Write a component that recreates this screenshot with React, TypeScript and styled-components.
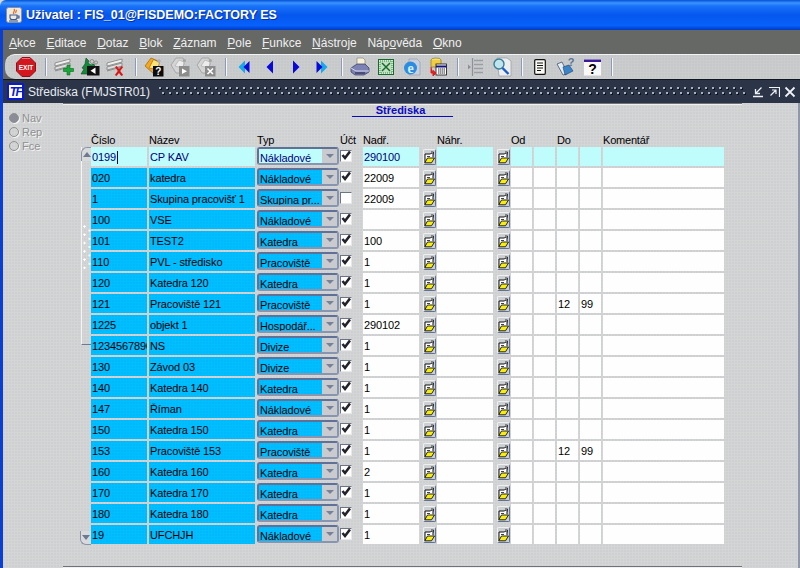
import React from 'react'
import styled, { createGlobalStyle, css } from 'styled-components'

const GlobalStyle = createGlobalStyle`
  html, body {
    margin: 0;
    padding: 0;
    overflow: hidden;
    background: #d6d6d6;
    font-family: "Liberation Sans", Arial, sans-serif;
  }
`

const grayDither = css`
  background-color: #d4d5d5;
  background-image: radial-gradient(circle at 1px 1px, rgba(170, 175, 190, 0.35) 0.6px, transparent 0.8px);
  background-size: 3px 3px;
`

const blueDither = css`
  background-color: #00bfff;
  background-image: radial-gradient(circle at 1px 1px, rgba(0, 120, 235, 0.2) 0.6px, transparent 0.8px);
  background-size: 3px 3px;
`

const Screen = styled.div`
  width: 800px;
  height: 568px;
  overflow: hidden;
  display: flex;
  flex-direction: column;
  color: #000;
  font-size: 11px;
`

const TitleBar = styled.div`
  height: 30px;
  flex: none;
  display: flex;
  align-items: center;
  gap: 4px;
  padding: 0 0 0 6px;
  border-top-left-radius: 6px;
  background: linear-gradient(180deg, #0450d6 0, #3b94ff 3px, #1a72f8 6px, #0557ee 50%, #0761fb 85%, #0039c4 100%);
`

const TitleText = styled.div`
  color: #fff;
  font-size: 12.5px;
  font-weight: 700;
  white-space: nowrap;
  text-shadow: 1px 1px 0 #0a2f9c;
`

const Shell = styled.div`
  flex: 1;
  min-height: 0;
  display: flex;
  flex-direction: column;
  border-left: 3px solid #0b3fd2;
`

const MenuBar = styled.div`
  height: 24px;
  flex: none;
  display: flex;
  align-items: center;
  gap: 10.7px;
  padding: 2px 0 0 6px;
  box-sizing: border-box;
  background: #666866;
  color: #f0f0f0;
  font-size: 12px;
`

const MenuItem = styled.span`
  white-space: nowrap;
  & u {
    text-underline-offset: 1px;
  }
`

const Toolbar = styled.div`
  height: 25px;
  flex: none;
  display: flex;
  align-items: center;
  box-sizing: border-box;
  padding-left: 8px;
  margin-left: 2px;
  border-top: 1px solid #f2f2f2;
  border-top-left-radius: 10px;
  border-bottom-left-radius: 10px;
  ${grayDither}
  background-color: #cbcdcd;
`

const ToolbarEdge = styled.div`
  flex: none;
  background: #666866;
`

const Tool = styled.div`
  width: 26px;
  height: 22px;
  flex: none;
  display: flex;
  align-items: center;
  justify-content: center;
`

const ToolSep = styled.div`
  width: 12px;
  height: 18px;
  flex: none;
  display: flex;
  justify-content: center;
  &::before {
    content: '';
    width: 1px;
    height: 100%;
    background: #8a9ab8;
    box-shadow: 1px 0 0 #f4f6fa;
  }
`

const FormBar = styled.div`
  height: 24px;
  flex: none;
  display: flex;
  align-items: center;
  box-sizing: border-box;
  padding: 0 4px 0 4px;
  background: #2b3547;
  border-top: 1px solid #10161f;
  color: #e8ecf2;
  font-size: 12px;
`

const FormLogo = styled.div`
  width: 17px;
  height: 17px;
  flex: none;
  display: flex;
  align-items: center;
  justify-content: center;
  box-sizing: border-box;
  background: #fff;
  border: 2px solid #0a1ad0;
  color: #0a1ad0;
  font: italic 700 12px "Liberation Sans", sans-serif;
  letter-spacing: -1.5px;
`

const FormTitle = styled.div`
  margin-left: 4px;
  white-space: nowrap;
`

const Dots = styled.div`
  flex: 1;
  height: 10px;
  margin: 0 6px 0 9px;
  background-image:
    radial-gradient(circle at 1px 1px, #aab2c0 0.9px, transparent 1px),
    radial-gradient(circle at 4px 6px, #aab2c0 0.9px, transparent 1px),
    radial-gradient(circle at 2px 2px, #0c121c 0.9px, transparent 1px),
    radial-gradient(circle at 5px 7px, #0c121c 0.9px, transparent 1px);
  background-size: 7px 10px;
`

const WinButtons = styled.div`
  display: flex;
  align-items: center;
  gap: 4px;
  flex: none;
`

const Content = styled.div`
  flex: 1;
  min-height: 0;
  display: flex;
  border-right: 2px solid #8f98a8;
  ${grayDither}
`

const Side = styled.div`
  width: 77px;
  flex: none;
  box-sizing: border-box;
  padding: 9px 0 0 6px;
  display: flex;
  flex-direction: column;
  gap: 3px;
`

const RadioRow = styled.div`
  height: 11px;
  display: flex;
  align-items: center;
  gap: 3px;
  color: #8f9090;
  text-shadow: 1px 1px 0 #f4f4f4;
  font-size: 11px;
`

const Radio = styled.span<{ $on?: boolean }>`
  width: 8px;
  height: 8px;
  border-radius: 50%;
  border: 1px solid #8f9090;
  box-shadow: 1px 1px 0 #f6f6f6;
  background: ${p => (p.$on ? '#8a8c98' : 'transparent')};
`

const Form = styled.div`
  width: 644px;
  flex: none;
  display: flex;
  flex-direction: column;
`

const Rule = styled.div<{ $top?: number }>`
  width: 679px;
  height: 2px;
  flex: none;
  box-sizing: border-box;
  margin-left: -17px;
  margin-top: ${p => p.$top ?? 0}px;
  background: #f0f0f0;
  border-top: 1px solid #6f7278;
`

const Heading = styled.div`
  align-self: center;
  width: 101px;
  height: 12px;
  line-height: 10px;
  flex: none;
  text-align: center;
  box-sizing: border-box;
  padding-right: 3px;
  color: #0a0ac4;
  font-weight: 700;
  border-bottom: 1px solid #0a0ac4;
`

const Grid = styled.div`
  display: grid;
  grid-template-columns: 58px 108px 83px 23px 60px 14px 60px 14px 23px 23px 23px 23px 121px;
`

const HeaderRow = styled(Grid)`
  height: 15px;
  margin: 15px 0 0 11px;
  align-items: center;
  line-height: 14px;
`

const Label = styled.div`
  white-space: nowrap;
  letter-spacing: -0.2px;
`

const TableBody = styled.div`
  display: flex;
  flex: none;
`

const Scroll = styled.div`
  width: 11px;
  height: 398px;
  flex: none;
  display: flex;
  flex-direction: column;
  box-sizing: border-box;
`

const Thumb = styled.div`
  height: 198px;
  flex: none;
  box-sizing: border-box;
  border-left: 1px solid #f4f4f4;
  border-bottom: 1px solid #6e7890;
  margin-left: 1px;
  position: relative;
`

const ThumbCap = styled.div`
  height: 14px;
  margin-left: -1px;
  display: flex;
  align-items: center;
  justify-content: center;
  box-sizing: border-box;
  border: 1px solid #8a94a8;
  border-bottom: 0;
  border-right: 0;
  border-radius: 6px 0 0 0;
  background: #d9dadc;
`

const Grip = styled.div`
  position: absolute;
  left: 1px;
  top: 78px;
  width: 8px;
  height: 44px;
  background-image:
    radial-gradient(circle at 1.5px 1.5px, #fff 1px, transparent 1.2px),
    radial-gradient(circle at 6.5px 5.5px, #fff 1px, transparent 1.2px);
  background-size: 8px 8.3px;
`

const ScrollEnd = styled.div`
  height: 14px;
  margin-top: auto;
  flex: none;
  display: flex;
  align-items: center;
  justify-content: center;
  box-sizing: border-box;
  border: 1px solid #8a94a8;
  border-top: 0;
  border-right: 0;
  border-radius: 0 0 0 6px;
  background: #d9dadc;
`

const Arrow = styled.span<{ $down?: boolean }>`
  width: 0;
  height: 0;
  border-left: 4px solid transparent;
  border-right: 4px solid transparent;
  ${p => (p.$down ? 'border-top: 5px solid #6e7890;' : 'border-bottom: 5px solid #6e7890;')}
`

const Rows = styled.div`
  display: flex;
  flex-direction: column;
  gap: 2px;
`

const Row = styled(Grid)`
  height: 19px;
  align-items: stretch;
`

const Cell = styled.div<{ $kind: 'blue' | 'white' | 'current'; $gap?: number }>`
  height: 19px;
  line-height: 20px;
  margin-right: ${p => p.$gap ?? 2}px;
  padding-left: 1px;
  overflow: hidden;
  white-space: nowrap;
  box-sizing: border-box;
  letter-spacing: -0.12px;
  ${p => p.$kind === 'blue' && blueDither}
  ${p => p.$kind === 'white' && 'background: #fdfefd;'}
  ${p => p.$kind === 'current' && 'background: #bffdfd; color: #00007c;'}
`

const Caret = styled.span`
  display: inline-block;
  width: 1px;
  height: 13px;
  margin-left: 1px;
  vertical-align: -3px;
  background: #00007c;
`

const Select = styled.div`
  height: 18px;
  margin-right: 1px;
  display: flex;
  box-sizing: border-box;
  border: 2px solid #5f7196;
  border-radius: 3px;
  border-right-color: #8795b0;
  border-bottom-color: #8795b0;
  background: #d0d4d8;
`

const SelectValue = styled.div<{ $current?: boolean }>`
  flex: 1;
  min-width: 0;
  padding: 3px 0 0 1px;
  line-height: 13px;
  white-space: nowrap;
  overflow: hidden;
  letter-spacing: -0.12px;
  ${p => (p.$current ? 'background: #bffdfd; color: #00007c;' : blueDither)}
`

const SelectButton = styled.div`
  width: 15px;
  flex: none;
  display: flex;
  align-items: center;
  justify-content: center;
  background: #c9cbce;
`

const SmallArrow = styled.span`
  width: 0;
  height: 0;
  border-left: 4px solid transparent;
  border-right: 4px solid transparent;
  border-top: 4px solid #76829a;
`

const Check = styled.div`
  width: 12px;
  height: 12px;
  margin-top: 3px;
  box-sizing: border-box;
  background: #fdfefd;
  border-top: 1px solid #6c7484;
  border-left: 1px solid #6c7484;
  border-right: 1px solid #e8e8e8;
  border-bottom: 1px solid #e8e8e8;
  display: flex;
`

const FolderButton = styled.div`
  width: 13px;
  height: 16px;
  margin: 2px 0 0 0;
  box-sizing: border-box;
  display: flex;
  align-items: center;
  justify-content: center;
  background: #cdd0d2;
  border-top: 1px solid #eef0f2;
  border-left: 1px solid #eef0f2;
  border-right: 1px solid #5f7196;
  border-bottom: 1px solid #5f7196;
  border-radius: 2px;
`

function JavaIcon() {
  return (
    <svg width="16" height="16" viewBox="0 0 16 16">
      <rect x="0.5" y="0.5" width="15" height="15" rx="2" fill="#efe9dc" stroke="#8a8f9e" />
      <path d="M8 2c2 2-2 3 0 5M10 3c1 1-1 2 0 3" stroke="#e0651c" strokeWidth="1.2" fill="none" />
      <path d="M4 8h7v2.5c0 1-1 2-2 2H6c-1 0-2-1-2-2zM11 9h2v2h-2" fill="none" stroke="#3a5a94" strokeWidth="1.1" />
      <path d="M3 14h9" stroke="#3a5a94" strokeWidth="1.1" />
    </svg>
  )
}

function ExitIcon() {
  return (
    <svg width="20" height="20" viewBox="0 0 20 20">
      <polygon points="6,0.5 14,0.5 19.5,6 19.5,14 14,19.5 6,19.5 0.5,14 0.5,6" fill="#d4161e" stroke="#8c1218" />
      <path d="M6 1.5h8" stroke="#f0707a" />
      <text x="10" y="12.6" textAnchor="middle" fontSize="6.6" fontWeight="700" fill="#fff" fontFamily="Liberation Sans, sans-serif">EXIT</text>
    </svg>
  )
}

function Strips() {
  const c = '#7e7e7e'
  return (
    <>
      <path d="M1 6L16 2v3L1 9z" fill="#f0f0f0" stroke={c} strokeWidth="0.8" />
      <path d="M1 10L16 6v3L1 13z" fill="#e0e0e0" stroke={c} strokeWidth="0.8" />
      <path d="M1 14L14 10.5" stroke={c} strokeWidth="0.8" />
    </>
  )
}

function AddIcon() {
  return (
    <svg width="20" height="20" viewBox="0 0 20 20">
      <Strips />
      <path d="M13 8h3v3.5h3.5v3H16V18h-3v-3.500H9.500v-3H13z" fill="#18a838" stroke="#0c6a20" strokeWidth="0.6" />
    </svg>
  )
}

function LockIcon() {
  return (
    <svg width="20" height="20" viewBox="0 0 20 20">
      <path d="M6 1l3 3-1 2 3 2 3-1 1 3H8v7H1l3-5-2-1 3-4z" fill="#148a3c" stroke="#0a4a20" strokeWidth="0.6" />
      <circle cx="12" cy="4.500" r="2" fill="#c8c8c8" stroke="#555" strokeWidth="0.5" />
      <circle cx="16" cy="5.500" r="1.600" fill="#c8c8c8" stroke="#555" strokeWidth="0.5" />
      <rect x="7" y="9" width="12.500" height="9.500" fill="#111" />
      <path d="M15.500 10.500v6.500L10.500 13.700z" fill="#fff" />
    </svg>
  )
}

function RemoveIcon() {
  return (
    <svg width="20" height="20" viewBox="0 0 20 20">
      <Strips />
      <path d="M9 10l1.800-1L13 12l2.500-3 1.700 1-3 4 3 4-1.900 1-2.300-3-2.500 3-1.700-1 3-4z" fill="#d81818" />
    </svg>
  )
}

function QueryIcon() {
  return (
    <svg width="20" height="20" viewBox="0 0 20 20">
      <path d="M1 9L7 1l7 3-4 13z" fill="#f4a81c" stroke="#a06008" strokeWidth="0.7" />
      <path d="M5 11L9.500 2.500l6 3-2 7z" fill="#fce27a" stroke="#a06008" strokeWidth="0.6" />
      <circle cx="15" cy="4" r="1.800" fill="#a8b0c8" />
      <rect x="9" y="9" width="10.500" height="10.500" fill="#0c0c0c" />
      <text x="14.200" y="18" textAnchor="middle" fontSize="10" fontWeight="700" fill="#fff" fontFamily="Liberation Sans, sans-serif">?</text>
    </svg>
  )
}

function GrayCards({ x }: { x?: boolean }) {
  return (
    <svg width="20" height="20" viewBox="0 0 20 20">
      <path d="M1 8L6 1h7l1 6-3 9H6z" fill="#d4d4d4" stroke="#9a9a9a" strokeWidth="0.8" />
      <path d="M5 9L9 3l5 2-1 6z" fill="#ececec" stroke="#a4a4a4" strokeWidth="0.6" />
      <circle cx="14.500" cy="3.500" r="1.500" fill="#a4a4a4" />
      <rect x="9" y="9" width="10.500" height="10.500" fill="#8c8c8c" />
      {x
        ? <path d="M11.500 11.500l5.500 5.500M17 11.500L11.500 17" stroke="#fff" strokeWidth="1.600" />
        : <path d="M12 11.500v5.500l5-2.700z" fill="#fff" />}
    </svg>
  )
}

function NavIcon({ dir, double }: { dir: 'left' | 'right'; double?: boolean }) {
  const flip = dir === 'right' ? 'translate(12 0) scale(-1 1)' : undefined
  return (
    <svg width="12" height="14" viewBox="0 0 12 14">
      <g transform={flip}>
        {double ? (
          <>
            <path d="M7 0.500L0.500 7 7 13.500z" fill="#18a8e8" />
            <path d="M11.500 1L5.500 7l6 6z" fill="#0808d8" />
          </>
        ) : (
          <path d="M9 0.500L2.500 7 9 13.500z" fill="#0808d8" />
        )}
      </g>
    </svg>
  )
}

function PrinterIcon() {
  return (
    <svg width="20" height="20" viewBox="0 0 20 20">
      <path d="M7 1h6l2 2v7H7z" fill="#f6f2d8" stroke="#777" strokeWidth="0.6" />
      <path d="M1 11l6-4h8l4 4v4l-5 3H5l-4-3z" fill="#7c82b4" stroke="#34365c" strokeWidth="0.7" />
      <path d="M1 11l5 3h13" fill="none" stroke="#d4d6ee" strokeWidth="1" />
      <path d="M5 16h10" stroke="#2a2c4c" strokeWidth="1.200" />
    </svg>
  )
}

function ExcelIcon() {
  return (
    <svg width="16" height="16" viewBox="0 0 16 16">
      <rect x="0.500" y="0.500" width="15" height="15" fill="#d8ecd8" stroke="#186a2c" />
      <rect x="2" y="2" width="12" height="12" fill="#c0e0c0" stroke="#2c8a44" strokeDasharray="1 1" />
      <path d="M4 4l8 8M12 4l-8 8" stroke="#186a2c" strokeWidth="1.500" />
    </svg>
  )
}

function BrowserIcon() {
  return (
    <svg width="18" height="18" viewBox="0 0 18 18">
      <path d="M6 1h8l3 3v13H6z" fill="#c8d0de" stroke="#8a94a8" strokeWidth="0.6" />
      <circle cx="7.500" cy="10" r="6.500" fill="#2c8ce0" />
      <text x="7.500" y="15" textAnchor="middle" fontSize="14" fontWeight="700" fill="#d8f0ff" fontFamily="Liberation Serif, serif">e</text>
    </svg>
  )
}

function ExportIcon() {
  return (
    <svg width="18" height="20" viewBox="0 0 18 20">
      <ellipse cx="7" cy="3" rx="5" ry="2" fill="#f4e070" stroke="#7c6a10" strokeWidth="0.6" />
      <path d="M2 3v7h10V3" fill="#f0cc40" stroke="#7c6a10" strokeWidth="0.6" />
      <rect x="7" y="7" width="10.500" height="11" fill="#fff" stroke="#111" strokeWidth="0.8" />
      <path d="M7 9.500h10.500" stroke="#101080" strokeWidth="2" />
      <path d="M9 12h7M9 14h7M9 16h7" stroke="#111" strokeWidth="0.9" strokeDasharray="1.500 0.500" />
      <path d="M2 10v6h2.500M4 13.500L7 16l-3 3z" fill="#e01c1c" stroke="#e01c1c" strokeWidth="1" />
    </svg>
  )
}

function ListIcon() {
  return (
    <svg width="18" height="20" viewBox="0 0 18 20">
      <path d="M5.500 1v18" stroke="#8e9298" strokeWidth="1.200" />
      <path d="M1 7.500l3 2.500-3 2.500z" fill="#8e9298" />
      <path d="M7 3.500h9M7 7.500h9M7 11.500h9M7 15.500h9" stroke="#9a9ea4" strokeWidth="1.300" />
    </svg>
  )
}

function MagnifyIcon() {
  return (
    <svg width="20" height="20" viewBox="0 0 20 20">
      <path d="M5 1h10l4 3v15H7z" fill="#eceef0" stroke="#8a8e96" strokeWidth="0.6" />
      <circle cx="7" cy="7" r="5" fill="#bfe4ec" stroke="#3c7c98" strokeWidth="1.400" />
      <path d="M10.500 11l6 6" stroke="#1c5cc8" strokeWidth="2.400" />
    </svg>
  )
}

function DocIcon() {
  return (
    <svg width="12" height="16" viewBox="0 0 12 16">
      <rect x="0.700" y="0.700" width="10.600" height="14.600" rx="1" fill="#fbfbf6" stroke="#111" strokeWidth="1.200" />
      <path d="M3 4h6M3 6.500h6M3 9h6M3 11.500h4" stroke="#111" />
    </svg>
  )
}

function GuideIcon() {
  return (
    <svg width="20" height="20" viewBox="0 0 20 20">
      <path d="M1 7l5-2 3 6 2 6-4 1z" fill="#e4ecf4" stroke="#30405c" strokeWidth="0.7" />
      <path d="M7 10l6-2 4 6-8 4z" fill="#3c84c8" stroke="#1c3c70" strokeWidth="0.6" />
      <text x="15" y="9" textAnchor="middle" fontSize="11" fontWeight="700" fill="#5a7498" fontFamily="Liberation Sans, sans-serif">?</text>
    </svg>
  )
}

function HelpIcon() {
  return (
    <svg width="17" height="17" viewBox="0 0 17 17">
      <rect x="0" y="0.500" width="17" height="16" fill="#f8f8f8" />
      <rect x="0" y="0.500" width="17" height="2.500" fill="#3a1a9a" />
      <text x="8.500" y="15" textAnchor="middle" fontSize="14" fontWeight="700" fill="#000" fontFamily="Liberation Sans, sans-serif">?</text>
    </svg>
  )
}

function CheckMark() {
  return (
    <svg width="10" height="10" viewBox="0 0 10 10">
      <path d="M1.500 4L4 7 9 0.500" fill="none" stroke="#22222a" strokeWidth="2.600" />
    </svg>
  )
}

function FolderIcon() {
  return (
    <svg width="11" height="13" viewBox="0 0 11 13">
      <path d="M1 11.500V3h5.500l1-1 1.500 1.500V6" fill="#fdfdfd" stroke="#111" strokeWidth="1" />
      <path d="M3 5.500h3M7 1l2.500 0v2.500" fill="none" stroke="#111" strokeWidth="0.8" />
      <path d="M0.800 11.800L3.500 7h7l-3 4.800z" fill="#f6ee10" stroke="#111" strokeWidth="0.9" />
    </svg>
  )
}

function MinimizeGlyph() {
  return (
    <svg width="12" height="12" viewBox="0 0 12 12">
      <path d="M9.500 1.500L3.500 7.500M3.500 3v4.500H8M1 10.500h10" fill="none" stroke="#eef1f5" strokeWidth="1.300" />
    </svg>
  )
}

function MaximizeGlyph() {
  return (
    <svg width="12" height="12" viewBox="0 0 12 12">
      <path d="M1 1.500h10.500V11M2.500 9.500L8 4M4 4h4v4" fill="none" stroke="#eef1f5" strokeWidth="1.200" />
    </svg>
  )
}

function CloseGlyph() {
  return (
    <svg width="12" height="12" viewBox="0 0 12 12">
      <path d="M1.500 1.500l9 9M10.500 1.500l-9 9" fill="none" stroke="#eef1f5" strokeWidth="1.800" />
    </svg>
  )
}

const menus: [string, string, string][] = [
  ['', 'A', 'kce'],
  ['', 'E', 'ditace'],
  ['', 'D', 'otaz'],
  ['', 'B', 'lok'],
  ['', 'Z', 'áznam'],
  ['', 'P', 'ole'],
  ['', 'F', 'unkce'],
  ['', 'N', 'ástroje'],
  ['Náp', 'o', 'věda'],
  ['', 'O', 'kno'],
]

interface Unit {
  code: string
  name: string
  type: string
  counted?: boolean
  parent: string
  from?: string
  to?: string
}

const units: Unit[] = [
  { code: '0199', name: 'CP KAV', type: 'Nákladové', parent: '290100' },
  { code: '020', name: 'katedra', type: 'Nákladové', parent: '22009' },
  { code: '1', name: 'Skupina pracovišť 1', type: 'Skupina pr...', counted: false, parent: '22009' },
  { code: '100', name: 'VSE', type: 'Nákladové', parent: '' },
  { code: '101', name: 'TEST2', type: 'Katedra', parent: '100' },
  { code: '110', name: 'PVL - středisko', type: 'Pracoviště', parent: '1' },
  { code: '120', name: 'Katedra 120', type: 'Katedra', parent: '1' },
  { code: '121', name: 'Pracoviště 121', type: 'Pracoviště', parent: '1', from: '12', to: '99' },
  { code: '1225', name: 'objekt 1', type: 'Hospodář...', parent: '290102' },
  { code: '1234567890', name: 'NS', type: 'Divize', parent: '1' },
  { code: '130', name: 'Závod 03', type: 'Divize', parent: '1' },
  { code: '140', name: 'Katedra 140', type: 'Katedra', parent: '1' },
  { code: '147', name: 'Říman', type: 'Nákladové', parent: '1' },
  { code: '150', name: 'Katedra 150', type: 'Katedra', parent: '1' },
  { code: '153', name: 'Pracoviště 153', type: 'Pracoviště', parent: '1', from: '12', to: '99' },
  { code: '160', name: 'Katedra 160', type: 'Katedra', parent: '2' },
  { code: '170', name: 'Katedra 170', type: 'Katedra', parent: '1' },
  { code: '180', name: 'Katedra 180', type: 'Katedra', parent: '1' },
  { code: '19', name: 'UFCHJH', type: 'Nákladové', parent: '1' },
]

const headers = ['Číslo', 'Název', 'Typ', 'Účt', 'Nadř.', '', 'Náhr.', '', 'Od', '', 'Do', '', 'Komentář']

export default function App() {
  return (
    <Screen>
      <GlobalStyle />
      <TitleBar>
        <JavaIcon />
        <TitleText>Uživatel : FIS_01@FISDEMO:FACTORY ES</TitleText>
      </TitleBar>
      <Shell>
        <MenuBar>
          {menus.map(([pre, key, rest]) => (
            <MenuItem key={pre + key + rest}>
              {pre}
              <u>{key}</u>
              {rest}
            </MenuItem>
          ))}
        </MenuBar>
        <ToolbarEdge>
          <Toolbar>
            <Tool><ExitIcon /></Tool>
            <ToolSep />
            <Tool><AddIcon /></Tool>
            <Tool><LockIcon /></Tool>
            <Tool><RemoveIcon /></Tool>
            <ToolSep />
            <Tool><QueryIcon /></Tool>
            <Tool><GrayCards /></Tool>
            <Tool><GrayCards x /></Tool>
            <ToolSep />
            <Tool><NavIcon dir="left" double /></Tool>
            <Tool><NavIcon dir="left" /></Tool>
            <Tool><NavIcon dir="right" /></Tool>
            <Tool><NavIcon dir="right" double /></Tool>
            <ToolSep />
            <Tool><PrinterIcon /></Tool>
            <Tool><ExcelIcon /></Tool>
            <Tool><BrowserIcon /></Tool>
            <Tool><ExportIcon /></Tool>
            <ToolSep />
            <Tool><ListIcon /></Tool>
            <Tool><MagnifyIcon /></Tool>
            <ToolSep />
            <Tool><DocIcon /></Tool>
            <Tool><GuideIcon /></Tool>
            <Tool><HelpIcon /></Tool>
            <ToolSep />
          </Toolbar>
        </ToolbarEdge>
        <FormBar>
          <FormLogo>TF</FormLogo>
          <FormTitle>Střediska (FMJSTR01)</FormTitle>
          <Dots />
          <WinButtons>
            <MinimizeGlyph />
            <MaximizeGlyph />
            <CloseGlyph />
          </WinButtons>
        </FormBar>
        <Content>
          <Side>
            <RadioRow><Radio $on />Nav</RadioRow>
            <RadioRow><Radio />Rep</RadioRow>
            <RadioRow><Radio />Fce</RadioRow>
          </Side>
          <Form>
            <Rule />
            <Heading>Střediska</Heading>
            <HeaderRow>
              {headers.map((h, i) => <Label key={i}>{h}</Label>)}
            </HeaderRow>
            <TableBody>
              <Scroll>
                <Thumb>
                  <ThumbCap><Arrow /></ThumbCap>
                  <Grip />
                </Thumb>
                <ScrollEnd><Arrow $down /></ScrollEnd>
              </Scroll>
              <Rows>
                {units.map((u, i) => {
                  const current = i === 0
                  const fill = current ? 'current' : 'white'
                  const lead = current ? 'current' : 'blue'
                  return (
                    <Row key={u.code}>
                      <Cell $kind={lead}>{u.code}{current && <Caret />}</Cell>
                      <Cell $kind={lead}>{u.name}</Cell>
                      <Select>
                        <SelectValue $current={current}>{u.type}</SelectValue>
                        <SelectButton><SmallArrow /></SelectButton>
                      </Select>
                      <Check>{u.counted !== false && <CheckMark />}</Check>
                      <Cell $kind={fill} $gap={4}>{u.parent}</Cell>
                      <FolderButton><FolderIcon /></FolderButton>
                      <Cell $kind={fill} $gap={4} />
                      <FolderButton><FolderIcon /></FolderButton>
                      <Cell $kind={fill} />
                      <Cell $kind={fill} />
                      <Cell $kind={fill}>{u.from}</Cell>
                      <Cell $kind={fill}>{u.to}</Cell>
                      <Cell $kind={fill} $gap={0} />
                    </Row>
                  )
                })}
              </Rows>
            </TableBody>
            <Rule $top={21} />
          </Form>
        </Content>
      </Shell>
    </Screen>
  )
}
